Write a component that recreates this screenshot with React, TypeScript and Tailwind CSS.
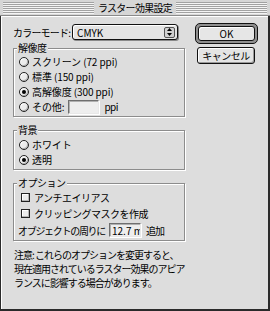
import React from 'react';

const FONT = "font-['Noto_Sans_CJK_JP','Noto_Sans',sans-serif]";

function Stripes() {
  return (
    <div className="flex h-[11px] flex-1 flex-col">
      {[0, 1, 2, 3, 4, 5].map((i) => (
        <div key={i} className="h-[2px] shrink-0 border-t border-b border-t-[#a2a2a2] border-b-[#f4f4f4]" />
      ))}
    </div>
  );
}

function Radio({ label, checked, children }: { label: string; checked?: boolean; children?: React.ReactNode }) {
  return (
    <div className="flex h-[15px] items-center">
      <span className="flex h-[10px] w-[10px] items-center justify-center rounded-full border border-[#222] bg-[#ececec] shadow-[inset_-1px_-1px_0_#b5b5b5,inset_1px_1px_0_#fff]">
        {checked && <span className="h-[4px] w-[4px] rounded-full bg-black" />}
      </span>
      <span className="ml-[3px] whitespace-pre tracking-[-0.1px]">{label}</span>
      {children}
    </div>
  );
}

function Check({ label }: { label: string }) {
  return (
    <div className="flex h-[16px] items-center">
      <span className="ml-[3px] h-[9px] w-[9px] border border-[#222] bg-[#ececec] shadow-[inset_-1px_-1px_0_#b5b5b5,inset_1px_1px_0_#fff]" />
      <span className="ml-[4px]">{label}</span>
    </div>
  );
}

function Field({ className, children }: { className?: string; children?: React.ReactNode }) {
  return (
    <span
      className={
        'flex items-center overflow-hidden whitespace-nowrap border border-[#6f6f6f] border-r-[#e8e8e8] border-b-[#e8e8e8] bg-[#eeeeee] pl-[2px] shadow-[inset_1px_1px_0_#b0b0b0,1px_1px_0_#fff] ' +
        (className ?? '')
      }
    >
      {children}
    </span>
  );
}

function Group({ title, className, children }: { title: string; className?: string; children: React.ReactNode }) {
  return (
    <div
      className={
        'relative border border-[#8c8c8c] shadow-[inset_1px_1px_0_#fff,1px_1px_0_#fff] ' + (className ?? '')
      }
    >
      <span className="absolute -top-[8px] left-[3px] bg-[#dddddd] px-[1px] leading-[14px]">{title}</span>
      {children}
    </div>
  );
}

export default function App() {
  return (
    <div className={`flex h-[311px] w-[270px] flex-col bg-[#dddddd] text-[10px] tracking-[-0.5px] text-black ${FONT}`}>
      {/* title bar */}
      <div className="flex h-[16px] shrink-0 items-center gap-[4px] border-b border-[#8a8a8a] bg-[#d6d6d6] px-[3px]">
        <Stripes />
        <span className="leading-[14px] tracking-[-0.7px]">ラスター効果設定</span>
        <Stripes />
      </div>

      <div className="flex flex-1 flex-col border-b-2 border-l border-r-2 border-[#2a2a2a] pl-[12px] pt-[8px] shadow-[inset_1px_1px_0_#fff]">
        <div className="flex">
          {/* left column */}
          <div className="flex w-[172px] flex-col">
            <div className="flex h-[16px] items-center">
              <span className="w-[59px] shrink-0 whitespace-nowrap tracking-[-0.8px]">カラーモード:</span>
              <div className="flex h-[16px] w-[106px] shrink-0 items-center rounded-[3px] border border-[#111] bg-[#e4e4e4] shadow-[inset_1px_1px_0_#fff,1px_1px_0_#8a8a8a]">
                <span className="ml-[4px] flex-1 tracking-normal">CMYK</span>
                <span className="mr-[2px] flex h-[11px] w-[11px] items-center justify-center rounded-[2px] border border-[#555] bg-[#d0d0d0]">
                  <svg width="5" height="8" viewBox="0 0 5 8">
                    <path d="M2.5 0 L5 3 L0 3 Z" fill="#000" />
                    <path d="M0 5 L5 5 L2.5 8 Z" fill="#000" />
                  </svg>
                </span>
              </div>
            </div>

            <Group title="解像度" className="mt-[8px] h-[69px] pl-[5px] pt-[5px]">
              <Radio label="スクリーン (72 ppi)" />
              <Radio label="標準 (150 ppi)" />
              <Radio label="高解像度 (300 ppi)" checked />
              <Radio label="その他:">
                <Field className="ml-[4px] h-[14px] w-[31px]" />
                <span className="ml-[5px]">ppi</span>
              </Radio>
            </Group>

            <Group title="背景" className="mt-[13px] h-[40px] pl-[5px] pt-[6px]">
              <Radio label="ホワイト" />
              <Radio label="透明" checked />
            </Group>

            <Group title="オプション" className="mt-[13px] h-[58px] pl-[4px] pt-[5px]">
              <Check label="アンチエイリアス" />
              <Check label="クリッピングマスクを作成" />
              <div className="flex h-[18px] items-center whitespace-nowrap">
                <span className="tracking-[-1.3px]">オブジェクトの周りに</span>
                <Field className="ml-[4px] h-[14px] w-[32px] shrink-0 tracking-normal">12.7 mm</Field>
                <span className="ml-[5px] tracking-[-1px]">追加</span>
              </div>
            </Group>
          </div>

          {/* right column */}
          <div className="ml-[10px] -mt-[1px] flex flex-col">
            <div className="flex h-[21px] w-[63px] rounded-[5px] border border-[#111] bg-[#8f8f8f] p-[2px]">
              <div className="flex flex-1 items-center justify-center rounded-[3px] border border-[#111] bg-[#e6e6e6] tracking-normal shadow-[inset_1px_1px_0_#fff]">
                OK
              </div>
            </div>
            <div className="ml-[2px] mt-[3px] flex h-[17px] w-[58px] items-center justify-center rounded-[3px] border border-[#111] bg-[#e4e4e4] shadow-[inset_1px_1px_0_#fff,inset_-1px_-1px_0_#9a9a9a]">
              キャンセル
            </div>
          </div>
        </div>

        <p className="mt-[7px] pl-[1px] leading-[14px] tracking-[-1px]">
          注意: これらのオプションを変更すると、
          <br />
          現在適用されているラスター効果のアピア
          <br />
          ランスに影響する場合があります。
        </p>
      </div>
    </div>
  );
}
